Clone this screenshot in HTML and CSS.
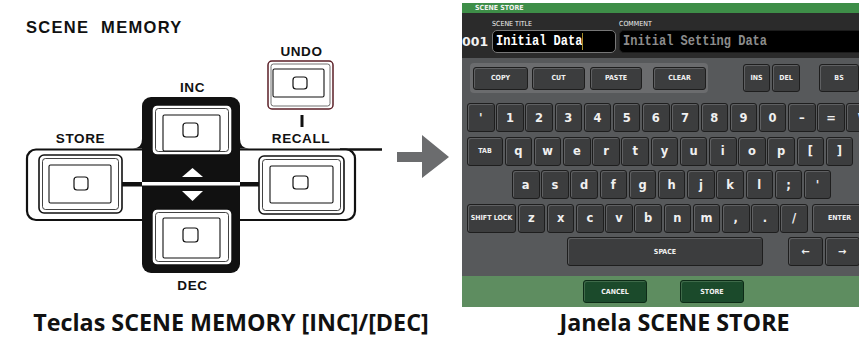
FILE: index.html
```html
<!DOCTYPE html>
<html lang="pt">
<head>
  <meta charset="UTF-8">
  <title>SCENE STORE</title>
  <link rel="stylesheet" href="styles.css">
</head>
<body>
  <div class="page">

    <figure class="fig fig-left">
      <svg class="diagram" width="462" height="296" viewBox="0 0 462 296">
        <text class="lbl lbl-big" x="26" y="33">SCENE&#160; MEMORY</text>

        <!-- base plate -->
        <line x1="340" y1="149.5" x2="382" y2="149.5" stroke="#111" stroke-width="2.4"/>
        <rect x="27" y="149.5" width="328" height="70.5" rx="9" fill="#fff" stroke="#111" stroke-width="2.2"/>
        <path d="M133 148.4 Q142 148.4 142 139 L142 148.4 Z" fill="#111"/>
        <path d="M249 148.4 Q240 148.4 240 139 L240 148.4 Z" fill="#111"/>
        <rect x="121" y="182" width="140" height="4.5" fill="#111"/>

        <!-- INC / DEC block -->
        <rect x="142" y="97" width="98" height="176" rx="9" fill="#111"/>
        <rect x="142" y="182" width="98" height="3.5" fill="#fff"/>
        <polygon points="182,177 203,177 192.5,168" fill="#fff"/>
        <polygon points="182,191 203,191 192.5,201" fill="#fff"/>

        <!-- INC -->
        <rect x="152" y="105" width="80" height="50" rx="5" fill="#fff" stroke="#111" stroke-width="1.4"/>
        <rect x="155.5" y="108.5" width="73" height="43" rx="3" fill="none" stroke="#111" stroke-width="0.8"/>
        <rect x="163" y="115" width="57" height="36" rx="1.5" fill="#fff" stroke="#111" stroke-width="1.1"/>
        <rect x="183" y="123" width="15" height="14" rx="3" fill="none" stroke="#111" stroke-width="1.2"/>

        <!-- DEC -->
        <rect x="152" y="209" width="80" height="56" rx="5" fill="#fff" stroke="#111" stroke-width="1.4"/>
        <rect x="155.5" y="212.5" width="73" height="49" rx="3" fill="none" stroke="#111" stroke-width="0.8"/>
        <rect x="163" y="218" width="57" height="40" rx="1.5" fill="#fff" stroke="#111" stroke-width="1.1"/>
        <rect x="183" y="228" width="15" height="14" rx="3" fill="none" stroke="#111" stroke-width="1.2"/>

        <!-- STORE -->
        <rect x="39" y="155" width="83" height="58" rx="5" fill="#fff" stroke="#111" stroke-width="1.6"/>
        <rect x="42.5" y="158.5" width="76" height="51" rx="3" fill="none" stroke="#111" stroke-width="0.8"/>
        <rect x="49" y="165" width="62" height="38" rx="1.5" fill="#fff" stroke="#111" stroke-width="1.1"/>
        <rect x="74" y="177" width="14" height="13" rx="3" fill="none" stroke="#111" stroke-width="1.2"/>

        <!-- RECALL -->
        <rect x="259" y="156" width="85" height="58" rx="5" fill="#fff" stroke="#111" stroke-width="1.6"/>
        <rect x="262.5" y="159.5" width="78" height="51" rx="3" fill="none" stroke="#111" stroke-width="0.8"/>
        <rect x="270" y="166" width="63" height="37" rx="1.5" fill="#fff" stroke="#111" stroke-width="1.1"/>
        <rect x="293" y="176" width="15" height="13" rx="3" fill="none" stroke="#111" stroke-width="1.2"/>

        <!-- UNDO -->
        <rect x="268" y="61" width="65" height="48" rx="4" fill="#fff" stroke="#5b1f27" stroke-width="1.5"/>
        <rect x="271" y="64" width="59" height="42" rx="2.5" fill="none" stroke="#333" stroke-width="0.7"/>
        <rect x="273" y="69" width="51" height="28" rx="1.5" fill="#fff" stroke="#111" stroke-width="1.1"/>
        <rect x="293" y="77" width="14" height="12" rx="3" fill="none" stroke="#111" stroke-width="1.2"/>
        <line x1="302" y1="115" x2="302" y2="127" stroke="#111" stroke-width="3"/>

        <text class="lbl" x="301.5" y="55.5" text-anchor="middle">UNDO</text>
        <text class="lbl" x="192.5" y="92" text-anchor="middle">INC</text>
        <text class="lbl" x="80.5" y="143" text-anchor="middle">STORE</text>
        <text class="lbl" x="301" y="143" text-anchor="middle">RECALL</text>
        <text class="lbl" x="192.5" y="290" text-anchor="middle">DEC</text>

        <!-- arrow -->
        <polygon points="397,152 422,152 422,135 449,157 422,178 422,162 397,162" fill="#6b6c6e"/>
      </svg>
      <figcaption class="caption caption-left">Teclas SCENE MEMORY [INC]/[DEC]</figcaption>
    </figure>

    <figure class="fig fig-right">
      <div class="panel">
        <div class="panel-title">SCENE STORE</div>

        <div class="panel-head">
          <div class="head-labels">
            <span class="lbl-title">SCENE TITLE</span>
            <span>COMMENT</span>
          </div>
          <div class="head-fields">
            <span class="scene-no">001</span>
            <div class="field field-title">
              <span class="mono">Initial Data</span>
              <span class="cursor"></span>
            </div>
            <div class="field field-comment">
              <span class="mono mono-dim">Initial Setting Data</span>
            </div>
          </div>
        </div>

        <div class="panel-body">
          <div class="edit-row">
            <div class="edit-group">
              <div class="key key-sm key-copy">COPY</div>
              <div class="key key-sm key-cut">CUT</div>
              <div class="key key-sm key-paste">PASTE</div>
              <div class="key key-sm key-clear">CLEAR</div>
            </div>
            <div class="key key-sm key-ins">INS</div>
            <div class="key key-sm key-del">DEL</div>
            <div class="key key-sm key-bs">BS</div>
          </div>

          <div class="keyboard">
            <div class="krow">
              <div class="key">'</div>
              <div class="key">1</div>
              <div class="key">2</div>
              <div class="key">3</div>
              <div class="key">4</div>
              <div class="key">5</div>
              <div class="key">6</div>
              <div class="key">7</div>
              <div class="key">8</div>
              <div class="key">9</div>
              <div class="key">0</div>
              <div class="key">–</div>
              <div class="key">=</div>
              <div class="key">\</div>
            </div>
            <div class="krow">
              <div class="key key-sm key-tab">TAB</div>
              <div class="key">q</div>
              <div class="key">w</div>
              <div class="key">e</div>
              <div class="key">r</div>
              <div class="key">t</div>
              <div class="key">y</div>
              <div class="key">u</div>
              <div class="key">i</div>
              <div class="key">o</div>
              <div class="key">p</div>
              <div class="key">[</div>
              <div class="key">]</div>
            </div>
            <div class="krow krow-home">
              <div class="key">a</div>
              <div class="key">s</div>
              <div class="key">d</div>
              <div class="key">f</div>
              <div class="key">g</div>
              <div class="key">h</div>
              <div class="key">j</div>
              <div class="key">k</div>
              <div class="key">l</div>
              <div class="key">;</div>
              <div class="key">'</div>
            </div>
            <div class="krow">
              <div class="key key-sm key-shift">SHIFT LOCK</div>
              <div class="key">z</div>
              <div class="key">x</div>
              <div class="key">c</div>
              <div class="key">v</div>
              <div class="key">b</div>
              <div class="key">n</div>
              <div class="key">m</div>
              <div class="key">,</div>
              <div class="key">.</div>
              <div class="key">/</div>
              <div class="key key-sm key-enter">ENTER</div>
            </div>
            <div class="krow krow-space">
              <div class="key key-sm key-space">SPACE</div>
              <div class="key key-arrow key-left">←</div>
              <div class="key key-arrow">→</div>
            </div>
          </div>
        </div>

        <div class="panel-foot">
          <div class="foot-btn">CANCEL</div>
          <div class="foot-btn">STORE</div>
        </div>
      </div>
      <figcaption class="caption caption-right">Janela SCENE STORE</figcaption>
    </figure>

  </div>
</body>
</html>
```

FILE: styles.css
```css
body {
  margin: 0;
  background: #fff;
  overflow: hidden;
}

.page {
  display: flex;
  align-items: flex-start;
  width: 900px;
}

.fig {
  margin: 0;
  flex: none;
}

.fig-left {
  width: 462px;
}

.diagram {
  display: block;
}

.lbl {
  font-family: "Liberation Sans", Arial, sans-serif;
  font-weight: bold;
  font-size: 13.5px;
  letter-spacing: 0.6px;
  fill: #111;
}

.lbl-big {
  font-size: 16.5px;
  letter-spacing: 1.3px;
}

.caption {
  font-family: "Open Sans", "Liberation Sans", sans-serif;
  font-weight: 700;
  font-size: 23.3px;
  line-height: 26px;
  color: #111;
  text-align: center;
}

.caption-left {
  margin-top: 13px;
}

.caption-right {
  margin-top: 2px;
}

/* SCENE STORE window */
.fig-right {
  width: 425px;
  padding-top: 3px;
}

.panel {
  width: 425px;
  font-family: "DejaVu Sans Condensed", "DejaVu Sans", sans-serif;
  color: #f2f2f2;
}

.panel-title {
  height: 10px;
  background: #3e8e48;
  font-size: 7px;
  line-height: 10px;
  font-weight: bold;
  padding-left: 13px;
}

.panel-head {
  height: 45px;
  box-sizing: border-box;
  background: #2b2b2b;
  padding-top: 7px;
}

.head-labels {
  height: 9px;
  font-size: 7px;
  line-height: 9px;
  padding-left: 30px;
  display: flex;
}

.lbl-title {
  width: 127px;
}

.head-fields {
  display: flex;
  align-items: center;
  height: 23px;
  margin-top: 1px;
}

.scene-no {
  width: 30px;
  font-family: "DejaVu Sans", sans-serif;
  font-size: 12.5px;
  font-weight: bold;
}

.field {
  height: 23px;
  box-sizing: border-box;
  background: #000;
  border: 1.5px solid #777;
  border-radius: 5px;
  display: flex;
  align-items: center;
  padding-left: 3px;
  overflow: hidden;
}

.field-title {
  width: 124px;
  margin-right: 3px;
  position: relative;
}

.field-comment {
  flex: 1;
  border-color: #1c1c1c;
}

.mono {
  display: inline-block;
  font-family: "Liberation Mono", monospace;
  font-weight: bold;
  font-size: 15px;
  white-space: pre;
  transform: scaleX(0.8);
  transform-origin: left center;
  color: #fff;
}

.mono-dim {
  color: #8c8c8c;
}

.cursor {
  position: absolute;
  left: 89px;
  top: 2px;
  bottom: 2px;
  width: 1px;
  background: #a48c2a;
}

.panel-body {
  height: 218px;
  box-sizing: border-box;
  background: #57595b;
  padding-top: 5px;
}

.edit-row {
  display: flex;
  align-items: center;
  height: 30px;
}

.edit-group {
  display: flex;
  align-items: center;
  width: 238px;
  height: 30px;
  box-sizing: border-box;
  margin-left: 8px;
  padding-left: 3px;
  background: #6b6c6e;
  border-radius: 4px;
}

.key {
  flex: none;
  box-sizing: border-box;
  width: 27.5px;
  height: 29px;
  margin-right: 1.7px;
  display: flex;
  align-items: center;
  justify-content: center;
  background: #3c3d3e;
  border: 1px solid #1e1e1e;
  border-radius: 3px;
  box-shadow: inset 1px 1px 0 #5f6062;
  font-family: "DejaVu Sans", sans-serif;
  font-weight: bold;
  font-size: 11.5px;
  color: #f0f0f0;
}

.key-sm {
  font-family: "DejaVu Sans Condensed", "DejaVu Sans", sans-serif;
  font-size: 7px;
}

.edit-group .key {
  height: 23px;
  margin-right: 0;
}

.key-copy { width: 55px; }
.key-cut { width: 53px; margin-left: 4px; }
.key-paste { width: 52px; margin-left: 5px; }
.key-clear { width: 53px; margin-left: 11px; }

.edit-row .key-ins { width: 27px; height: 28px; margin-left: 35px; margin-right: 2px; }
.edit-row .key-del { width: 28px; height: 28px; margin-right: 19px; }
.edit-row .key-bs { width: 40px; height: 28px; }

.keyboard {
  margin-top: 10px;
}

.krow {
  display: flex;
  height: 29px;
  margin-bottom: 4.5px;
  padding-left: 5px;
}

.krow-home {
  padding-left: 50px;
}

.krow-space {
  padding-left: 105px;
}

.key-tab { width: 36px; }
.key-shift { width: 49px; }
.key-enter { width: 56px; margin-left: 2px; }
.key-space { width: 196px; margin-right: 25px; }
.key-arrow { width: 35px; font-size: 10px; }

.panel-foot {
  height: 31px;
  box-sizing: border-box;
  background: #5e8d60;
  display: flex;
  padding: 4px 0 0 121px;
}

.foot-btn {
  width: 64px;
  height: 23px;
  box-sizing: border-box;
  margin-right: 33px;
  display: flex;
  align-items: center;
  justify-content: center;
  background: #1b4a2b;
  border: 1px solid #0d2b17;
  border-radius: 3px;
  box-shadow: inset 1px 1px 0 #3f6a4a;
  font-size: 7px;
  font-weight: bold;
}
```
